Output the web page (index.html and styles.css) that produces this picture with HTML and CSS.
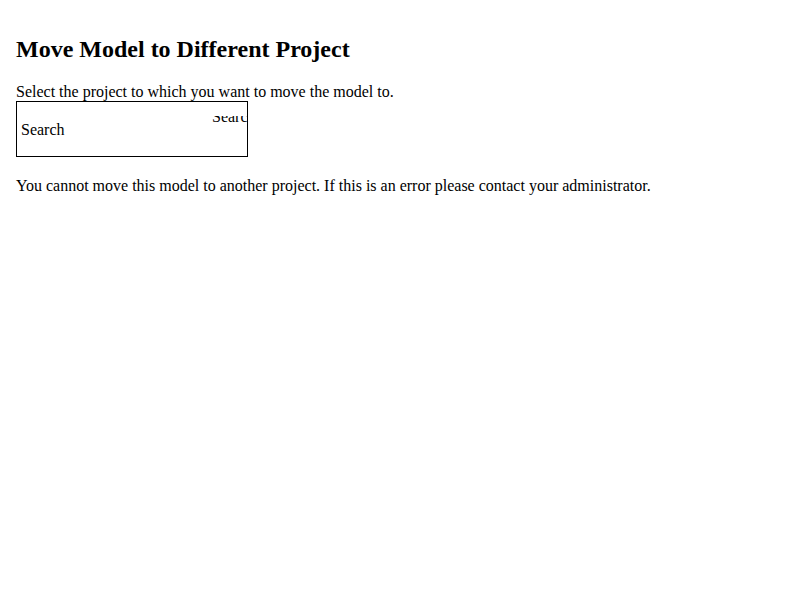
FILE: index.html
```html
<!DOCTYPE html>
<html>
<head>
<meta charset="utf-8">
<link rel="stylesheet" href="styles.css">
</head>
<body>
<div class="page">
  <h2 class="title">Move Model to Different Project</h2>
  <p class="intro">Select the project to which you want to move the model to.</p>
  <div class="picker">
    <span class="picker-text">Search</span>
    <span class="picker-label"><span class="picker-label-text">Search</span></span>
  </div>
  <p class="notice">You cannot move this model to another project. If this is an error please contact your administrator.</p>
</div>
</body>
</html>
```
FILE: styles.css
```css
html, body {
  margin: 0;
  padding: 0;
  background: #fff;
}
body {
  margin: 8px;
  font-family: "Liberation Serif", serif;
  font-size: 16px;
  color: #000;
}
.page {
  padding: 8px;
}
.title {
  font-size: 24px;
  font-weight: bold;
  margin: 19.92px 0;
}
.intro {
  margin: 0;
  line-height: 18px;
}
.picker {
  position: relative;
  box-sizing: border-box;
  width: 232px;
  height: 56px;
  border: 1px solid #000;
  display: flex;
  align-items: center;
  padding: 2px 0 0 4px;
  overflow: hidden;
}
.picker-text {
  line-height: 18px;
}
.picker-label {
  position: absolute;
  left: 195px;
  top: 14px;
  width: 40px;
  height: 7px;
  overflow: hidden;
}
.picker-label-text {
  display: block;
  line-height: 18px;
  margin-top: -8px;
  white-space: nowrap;
}
.notice {
  margin: 20px 0 0;
  line-height: 18px;
}
```
